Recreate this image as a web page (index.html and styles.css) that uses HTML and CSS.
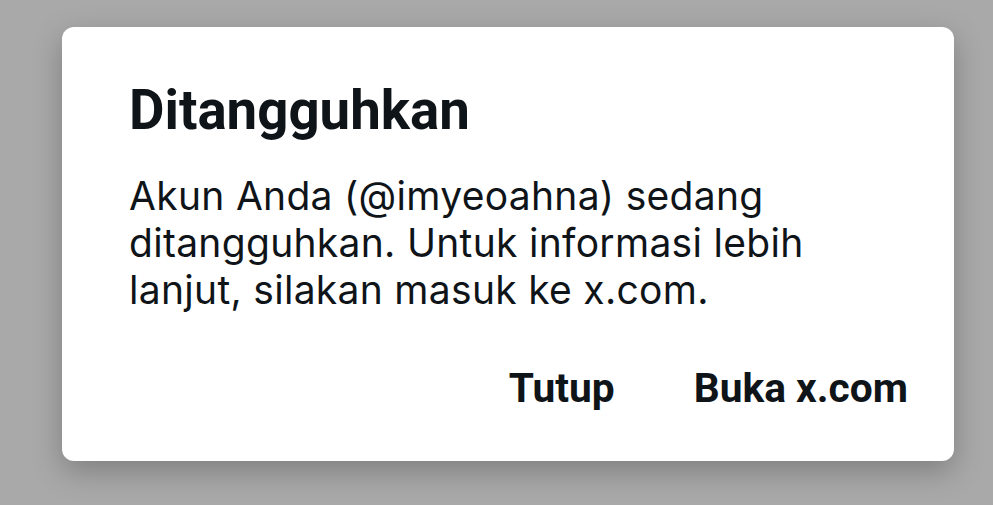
FILE: index.html
```html
<!DOCTYPE html>
<html lang="id">
<head>
<meta charset="utf-8">
<link rel="stylesheet" href="styles.css">
</head>
<body>
<div class="backdrop">
  <div class="dialog">
    <h1 class="title">Ditangguhkan</h1>
    <p class="message">Akun Anda (@imyeoahna) sedang ditangguhkan. Untuk informasi lebih lanjut, silakan masuk ke x.com.</p>
    <div class="actions">
      <span class="btn">Tutup</span>
      <span class="btn">Buka x.com</span>
    </div>
  </div>
</div>
</body>
</html>
```
FILE: styles.css
```css
html, body {
  margin: 0;
  padding: 0;
  background: #a9a9a9;
}
.backdrop {
  width: 993px;
  height: 505px;
  padding: 27px 0 0 62px;
  box-sizing: border-box;
}
.dialog {
  width: 892px;
  height: 434px;
  box-sizing: border-box;
  background: #ffffff;
  border-radius: 12px;
  box-shadow: 0 10px 30px rgba(0,0,0,0.25);
  padding: 51px 46px 0 67px;
  color: #0f1419;
}
.title {
  margin: 0;
  font-family: Roboto, "Liberation Sans", sans-serif;
  font-weight: 700;
  font-size: 54.6px;
  line-height: 64px;
}
.message {
  margin: 30px 0 0 0;
  font-family: Inter, "Noto Sans", sans-serif;
  font-weight: 400;
  font-size: 39px;
  line-height: 47px;
  letter-spacing: 0.3px;
  width: 760px;
}
.actions {
  display: flex;
  justify-content: flex-end;
  gap: 79px;
  margin-top: 51px;
}
.btn {
  font-family: Roboto, "Liberation Sans", sans-serif;
  font-weight: 700;
  font-size: 40.7px;
  line-height: 48px;
}
```
